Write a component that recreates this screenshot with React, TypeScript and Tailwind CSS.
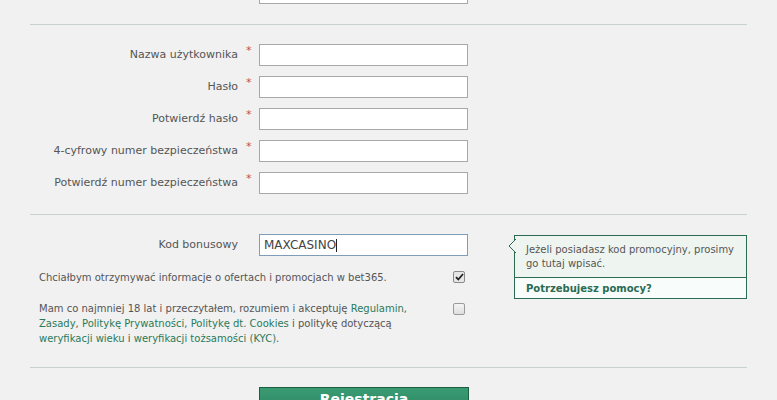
import React from "react";

const fields = [
  "Nazwa użytkownika",
  "Hasło",
  "Potwierdź hasło",
  "4-cyfrowy numer bezpieczeństwa",
  "Potwierdź numer bezpieczeństwa",
];

const Link = ({ children }: { children: React.ReactNode }) => (
  <a className="text-[#2a7a5a] no-underline">{children}</a>
);

const Row = ({ label, required = true, children }: { label: string; required?: boolean; children?: React.ReactNode }) => (
  <div className="flex items-center h-[22px]">
    <label className="w-[208px] text-right text-[11px] text-[#555]">{label}</label>
    <span className="w-[21px] self-start pl-[8px] text-[#c0504d] text-[11px] leading-[10px] pt-[2px]">
      {required ? "*" : ""}
    </span>
    {children ?? <input className="w-[209px] h-[22px] bg-white border border-[#a8a8a8] outline-none" />}
  </div>
);

const Separator = () => <div className="h-px bg-[#c8d2ce]" />;

export default function App() {
  return (
    <div
      className="w-[777px] h-[400px] overflow-hidden bg-[#f1f1f1] text-[10px] text-[#555]"
      style={{ fontFamily: '"DejaVu Sans", Verdana, sans-serif' }}
    >
      <div className="px-[30px]">
        {/* previous row, cut off at top */}
        <div className="-mt-[18px] mb-[20px]">
          <Row label="" required={false} />
        </div>
        <Separator />

        <div className="flex flex-col gap-[10px] pt-[19px] pb-[20px]">
          {fields.map((f) => (
            <Row key={f} label={f} />
          ))}
        </div>
        <Separator />

        <div className="flex items-start pt-[19px]">
          <div className="w-[438px] shrink-0">
            <Row label="Kod bonusowy" required={false}>
              <div className="w-[209px] h-[22px] bg-white border border-[#7f9db9] flex items-center pl-[4px] text-[12px] text-[#444]">
                MAXCASINO<span className="w-px h-[13px] bg-[#222]" />
              </div>
            </Row>

            <div className="flex items-center justify-between pl-[9px] mt-[14px] h-[14px]">
              <span>Chciałbym otrzymywać informacje o ofertach i promocjach w bet365.</span>
              <span className="w-[12px] h-[12px] rounded-[2px] border border-[#8a8a8a] bg-[#e6e6e6] flex items-center justify-center mr-[3px]">
                <svg width="9" height="8" viewBox="0 0 9 8">
                  <path d="M1 4.2 L3.3 6.5 L8 1" fill="none" stroke="#222" strokeWidth="1.8" />
                </svg>
              </span>
            </div>

            <div className="flex justify-between pl-[9px] mt-[17px] leading-[15px]">
              <p className="w-[385px]">
                Mam co najmniej 18 lat i przeczytałem, rozumiem i akceptuję <Link>Regulamin</Link>,{" "}
                <Link>Zasady</Link>, <Link>Politykę Prywatności</Link>, <Link>Politykę dt. Cookies</Link> i politykę dotyczącą{" "}
                <Link>weryfikacji wieku</Link> i <Link>weryfikacji tożsamości (KYC)</Link>.
              </p>
              <span className="w-[12px] h-[12px] mt-[2px] rounded-[2px] border border-[#9a9a9a] bg-gradient-to-b from-[#f4f4f4] to-[#dedede] mr-[3px]" />
            </div>
          </div>

          <div className="ml-[46px] mt-[1px] relative w-[235px] border border-[#2a6b52]">
            <svg className="absolute -left-[7px] top-[3px]" width="8" height="14" viewBox="0 0 8 14">
              <path d="M8 0 L1 7 L8 14" fill="#eef5f1" stroke="#2a6b52" strokeWidth="1" />
            </svg>
            <div className="bg-[#eef5f1] px-[11px] pt-[7px] pb-[6px] leading-[14px]">
              Jeżeli posiadasz kod promocyjny, prosimy go tutaj wpisać.
            </div>
            <div className="border-t border-[#2a6b52] bg-[#f8fcfa] px-[11px] h-[21px] flex items-center font-bold text-[#2a6b52]">
              Potrzebujesz pomocy?
            </div>
          </div>
        </div>

        <div className="mt-[21px]">
          <Separator />
        </div>

        <div className="pt-[19px] pl-[229px]">
          <button className="w-[210px] h-[30px] flex justify-center items-start pt-[3px] border border-[#1d5e43] bg-gradient-to-b from-[#3a9b73] to-[#2a8560] text-white font-bold text-[14px] leading-[16px]">
            Rejestracja
          </button>
        </div>
      </div>
    </div>
  );
}
